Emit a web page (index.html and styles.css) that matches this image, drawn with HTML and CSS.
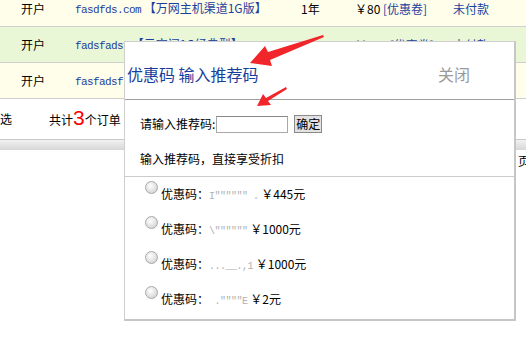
FILE: index.html
```html
<!DOCTYPE html>
<html lang="zh-CN">
<head>
    <meta charset="UTF-8">
    <title>订单列表</title>
    <link rel="stylesheet" href="styles.css">
</head>
<body>
    <!-- 订单表格 -->
    <div class="orders">
        <div class="order-row cream">
            <div class="cell first">开户</div>
            <div class="cell product"><span class="domain">fasdfds.com</span> 【万网主机渠道1G版】</div>
            <div class="cell">1年</div>
            <div class="cell">￥80 <a class="link">[优惠卷]</a></div>
            <div class="cell"><a class="link">未付款</a></div>
        </div>
        <div class="order-row green">
            <div class="cell first">开户</div>
            <div class="cell product"><span class="domain">fadsfadsf</span> 【云空间1G经典型】</div>
            <div class="cell">1年</div>
            <div class="cell">￥100 <a class="link">[优惠卷]</a></div>
            <div class="cell"><a class="link">未付款</a></div>
        </div>
        <div class="order-row cream">
            <div class="cell first">开户</div>
            <div class="cell product"><span class="domain">fasfadsf</span> 【云虚拟主机】</div>
            <div class="cell">1年</div>
            <div class="cell">￥80 <a class="link">[优惠卷]</a></div>
            <div class="cell"><a class="link">未付款</a></div>
        </div>
    </div>

    <div class="order-foot">
        <span class="select-all">全选</span>
        <span class="total">共计<em>3</em>个订单</span>
    </div>
    <div class="bar"></div>
    <div class="pager"><span>共1 页</span></div>

    <!-- 优惠码弹窗 -->
    <div class="dialog">
        <div class="dialog-head">
            <span class="dialog-title">优惠码 输入推荐码</span>
            <span class="dialog-close">关闭</span>
        </div>
        <div class="dialog-enter">
            <div class="enter-row">
                <span>请输入推荐码:</span>
                <input class="code-input" type="text">
                <button class="ok-btn">确定</button>
            </div>
            <p class="hint">输入推荐码，直接享受折扣</p>
        </div>
        <div class="coupon-list">
            <div class="coupon"><span class="radio"></span><span class="coupon-text">优惠码：<span class="code">I""""""  .</span> ￥445元</span></div>
            <div class="coupon"><span class="radio"></span><span class="coupon-text">优惠码：<span class="code">\""""""</span> ￥1000元</span></div>
            <div class="coupon"><span class="radio"></span><span class="coupon-text">优惠码：<span class="code">...__.,1</span> ￥1000元</span></div>
            <div class="coupon"><span class="radio"></span><span class="coupon-text">优惠码：<span class="code">  .""""E</span> ￥2元</span></div>
        </div>
    </div>

    <!-- 红色标注箭头 -->
    <svg class="arrows" width="526" height="361" viewBox="0 0 526 361">
        <polygon fill="#f0262a" points="323,35 268,52 265,46 250,63 272,66 270,60 324,37"/>
        <polygon fill="#f0262a" points="286,87 266,98 263,94 257,106 271,105 268,101 287,89"/>
    </svg>
</body>
</html>
```

FILE: styles.css
```css
/* Allgemein */
body {
    margin: 0;
    width: 526px;
    height: 361px;
    overflow: hidden;
    position: relative;
    background: #fff;
    color: #000;
    font-family: "Noto Sans CJK SC", sans-serif;
    font-size: 12px;
    line-height: 14px;
}

/* Tabelle */
.orders {
    margin-top: -9px;
}
.order-row {
    display: grid;
    grid-template-columns: 75px 226px 54px 98px 1fr;
    align-items: center;
    height: 35px;
    border-bottom: 1px solid #cfcfcf;
    white-space: nowrap;
}
.order-row.cream {
    background: #fffeea;
}
.order-row.green {
    background: #eaf7d6;
}
.cell.first {
    padding-left: 21px;
}
.product {
    color: #1b3f9e;
}
.domain {
    font-family: "Liberation Mono", monospace;
    font-size: 11px;
    letter-spacing: -0.6px;
}
.link {
    color: #1b3f9e;
    text-decoration: none;
}

/* Fußzeile */
.order-foot {
    display: flex;
    align-items: center;
    height: 40px;
    white-space: nowrap;
}
.select-all {
    margin-left: -12px;
}
.total {
    margin-left: 37px;
}
.total em {
    font-style: normal;
    font-family: "Liberation Sans", sans-serif;
    font-size: 21px;
    color: #f00;
}
.bar {
    height: 10px;
    border-top: 1px solid #c8c8c8;
    background: linear-gradient(#f2f2f2, #d6d6d6);
}
.pager {
    display: flex;
    justify-content: flex-end;
    height: 22px;
    align-items: center;
    margin-right: -4px;
    white-space: pre;
}

/* Dialog */
.dialog {
    position: absolute;
    left: 124px;
    top: 41px;
    width: 392px;
    height: 280px;
    box-sizing: border-box;
    background: #fff;
    border-top: 1px solid #cfcfcf;
    border-left: 1px solid #cfcfcf;
    border-right: 2px solid #c6c6c6;
    border-bottom: 2px solid #c6c6c6;
}
.dialog-head {
    display: flex;
    align-items: center;
    height: 58px;
    box-sizing: border-box;
    padding: 6px 0 0 2px;
    border-bottom: 1px solid #a0a0a0;
    font-size: 16px;
    line-height: 18px;
}
.dialog-title {
    color: #183e9c;
}
.dialog-close {
    margin-left: auto;
    margin-right: 44px;
    color: #9a9a9a;
}
.dialog-enter {
    height: 77px;
    box-sizing: border-box;
    padding: 15px 0 0 15px;
    border-bottom: 1px solid #cccccc;
}
.enter-row {
    display: flex;
    align-items: center;
    height: 18px;
}
.code-input {
    width: 72px;
    height: 17px;
    box-sizing: border-box;
    margin: 0 0 0 1px;
    border: 1px solid #a8a8a8;
    border-top-color: #888;
    padding: 0;
}
.ok-btn {
    width: 28px;
    height: 18px;
    margin-left: 6px;
    padding: 0;
    border: 1px solid #8a8a8a;
    background: #e2e2e2;
    font-family: "Noto Sans CJK SC", sans-serif;
    font-size: 12px;
    line-height: 14px;
    color: #000;
}
.hint {
    margin: 19px 0 0;
}

/* Coupon-Liste */
.coupon {
    display: flex;
    align-items: flex-start;
    height: 35px;
    white-space: nowrap;
}
.radio {
    width: 11px;
    height: 11px;
    margin: 4px 3px 0 20px;
    border: 1px solid #a9a9a9;
    border-radius: 50%;
    background: radial-gradient(circle at 40% 35%, #ffffff, #d9d9d9 70%, #c4c4c4);
}
.coupon-text {
    padding-top: 10px;
}
.code {
    font-family: "Liberation Mono", monospace;
    font-size: 10px;
    color: #b0b0b0;
    letter-spacing: -0.5px;
}

/* Pfeile */
.arrows {
    position: absolute;
    left: 0;
    top: 0;
    pointer-events: none;
}
```
